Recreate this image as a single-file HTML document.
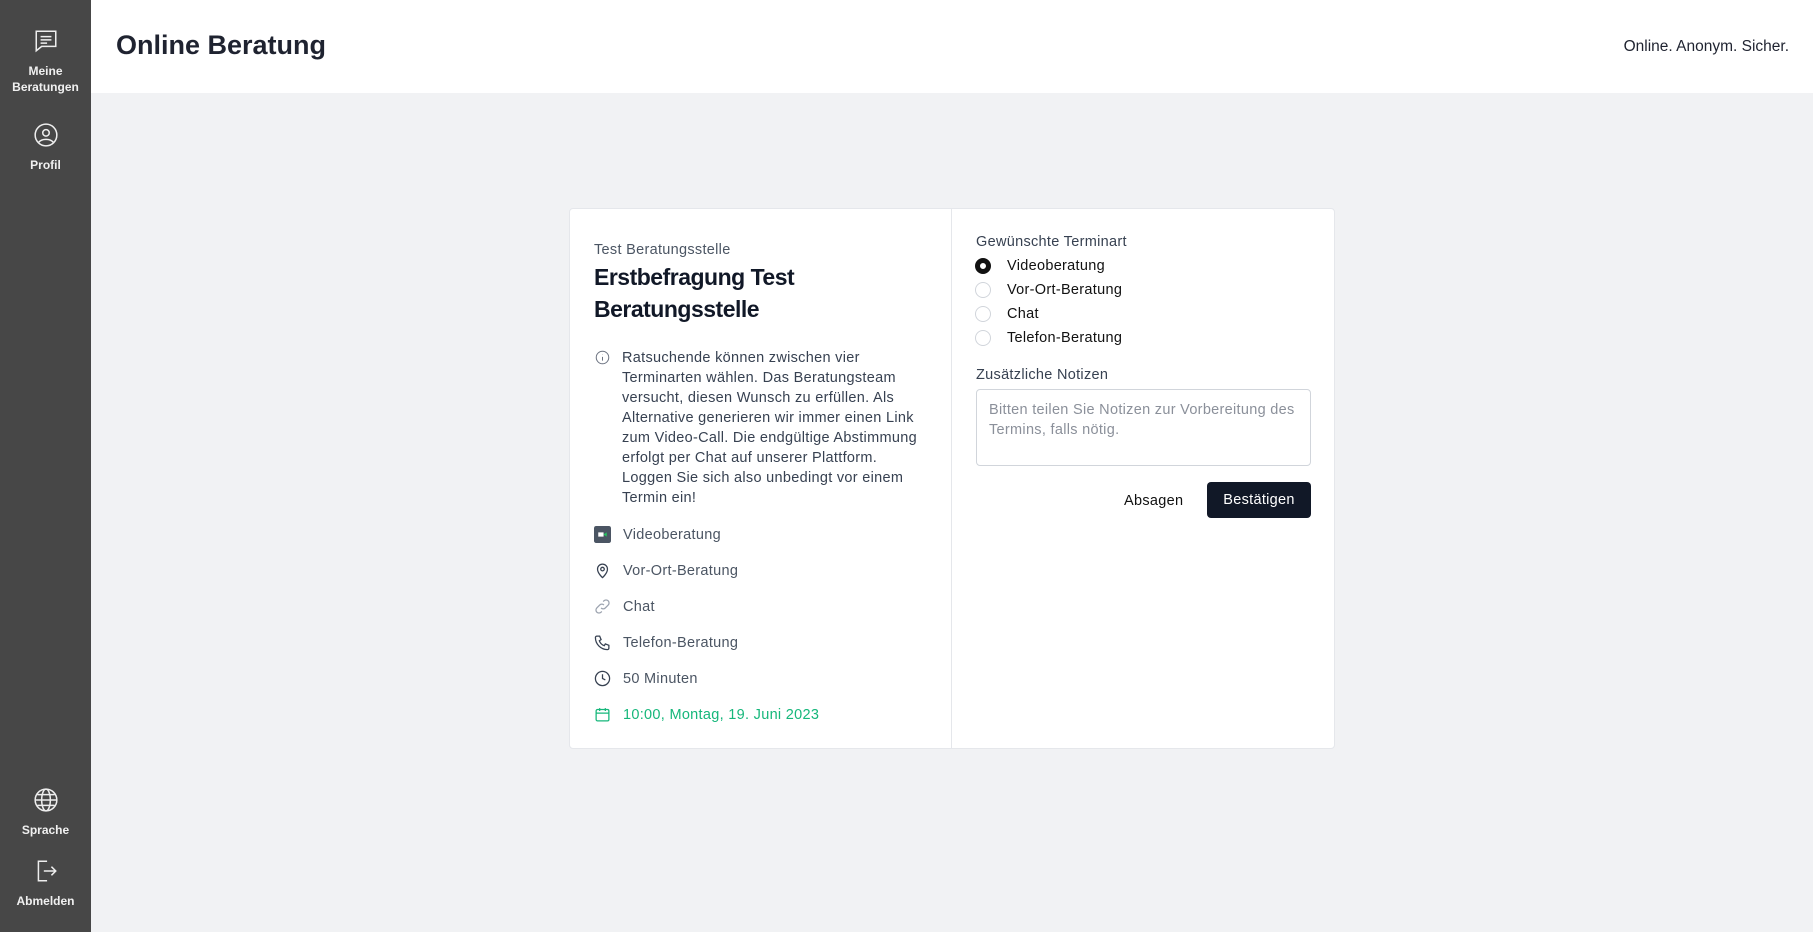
<!DOCTYPE html>
<html><head><meta charset="utf-8"><style>
*{box-sizing:border-box;margin:0;padding:0}
body{width:1820px;height:932px;background:#f1f2f4;font-family:"Liberation Sans",sans-serif;position:relative;overflow:hidden;color:#374151}
.sb{position:absolute;left:0;top:0;width:91px;height:932px;background:#474747}
.si{position:absolute;left:0;width:91px;text-align:center;color:#f0f0f0;font-size:12px;font-weight:bold;line-height:16px}
.si svg{display:block;margin:0 auto 9px}
.hd{position:absolute;left:91px;top:0;width:1722px;height:93px;background:#fff}
.hd h1{position:absolute;left:25px;top:30px;font-size:27px;color:#1f2330;font-weight:bold}
.hd .r{position:absolute;right:24px;top:38px;font-size:15.5px;color:#1f2330}
.strip{position:absolute;right:0;top:0;width:7px;height:932px;background:#fff}
.card{position:absolute;left:569px;top:208px;width:766px;height:541px;background:#fff;border:1px solid #e5e7eb;border-radius:4px}
.div{position:absolute;left:381px;top:0;width:1px;height:539px;background:#e5e7eb}
.a{position:absolute;font-size:14.5px;letter-spacing:0.3px}
.row{position:absolute;left:24px;font-size:14.5px;letter-spacing:0.3px;color:#4b5563;display:flex;align-items:center}
.row svg{width:17px;height:17px;margin-right:12px}
.rad{position:absolute;left:24px;display:flex;align-items:center;font-size:14.5px;letter-spacing:0.3px;color:#111}
.rad i{display:inline-block;width:16px;height:16px;border-radius:50%;border:1px solid #d1d5db;margin-right:16px}
.rad i.on{border:5px solid #111}
</style></head><body>
<div class="sb">
 <div class="si" style="top:28px"><svg width="26" height="26" viewBox="0 0 24 24" fill="none" stroke="#eee" stroke-width="1.4"><path d="M3 3h18v14H8l-5 4z"/><path d="M7 8h10M7 11h10M7 14h6"/></svg>Meine<br>Beratungen</div>
 <div class="si" style="top:122px"><svg width="26" height="26" viewBox="0 0 24 24" fill="none" stroke="#eee" stroke-width="1.4"><circle cx="12" cy="12" r="10"/><circle cx="12" cy="10" r="3"/><path d="M5 19c3-4 11-4 14 0"/></svg>Profil</div>
 <div class="si" style="top:787px"><svg width="26" height="26" viewBox="0 0 24 24" fill="none" stroke="#eee" stroke-width="1.4"><circle cx="12" cy="12" r="10"/><ellipse cx="12" cy="12" rx="4" ry="10"/><path d="M2 12h20M4 7h16M4 17h16"/></svg>Sprache</div>
 <div class="si" style="top:858px"><svg width="26" height="26" viewBox="0 0 24 24" fill="none" stroke="#eee" stroke-width="1.4"><path d="M13 3H5v18h8M10 12h11M17 8l4 4-4 4"/></svg>Abmelden</div>
</div>
<div class="hd"><h1>Online Beratung</h1><div class="r">Online. Anonym. Sicher.</div></div>
<div class="strip"></div>
<div class="card">
 <div class="div"></div>
 <div class="a" style="left:24px;top:33px;color:#4b5563">Test Beratungsstelle</div>
 <div class="a" style="left:24px;top:52px;font-size:23px;font-weight:bold;line-height:32px;color:#111827;letter-spacing:-0.5px">Erstbefragung Test<br>Beratungsstelle</div>
 <svg style="position:absolute;left:25px;top:141px" width="15" height="15" viewBox="0 0 24 24" fill="none" stroke="#6b7280" stroke-width="1.6"><circle cx="12" cy="12" r="10"/><path d="M12 11v6M12 7.5v.5"/></svg>
 <div class="a" style="left:52px;top:139px;white-space:nowrap;line-height:20px;color:#374151">Ratsuchende können zwischen vier<br>Terminarten wählen. Das Beratungsteam<br>versucht, diesen Wunsch zu erfüllen. Als<br>Alternative generieren wir immer einen Link<br>zum Video-Call. Die endgültige Abstimmung<br>erfolgt per Chat auf unserer Plattform.<br>Loggen Sie sich also unbedingt vor einem<br>Termin ein!</div>
 <div class="row" style="top:317px"><svg viewBox="0 0 16 16"><rect x="0" y="0" width="16" height="16" rx="2" fill="#4b5563"/><rect x="4" y="6" width="5" height="4" fill="#fff"/><path d="M9 8l3-2v4z" fill="#22c55e"/></svg>Videoberatung</div>
 <div class="row" style="top:353px"><svg viewBox="0 0 24 24" fill="none" stroke="#374151" stroke-width="1.8"><path d="M12 22s7-6 7-12a7 7 0 0 0-14 0c0 6 7 12 7 12z"/><circle cx="12" cy="10" r="2.5"/></svg>Vor-Ort-Beratung</div>
 <div class="row" style="top:389px"><svg viewBox="0 0 24 24" fill="none" stroke="#9ca3af" stroke-width="1.8"><path d="M10 14a4 4 0 0 0 6 0l4-4a4 4 0 0 0-6-6l-1 1M14 10a4 4 0 0 0-6 0l-4 4a4 4 0 0 0 6 6l1-1"/></svg>Chat</div>
 <div class="row" style="top:425px"><svg viewBox="0 0 24 24" fill="none" stroke="#374151" stroke-width="1.8"><path d="M4 3h4l2 5-2.5 1.5a11 11 0 0 0 7 7L16 14l5 2v4a2 2 0 0 1-2 2A17 17 0 0 1 2 5a2 2 0 0 1 2-2z"/></svg>Telefon-Beratung</div>
 <div class="row" style="top:461px"><svg viewBox="0 0 24 24" fill="none" stroke="#374151" stroke-width="1.8"><circle cx="12" cy="12" r="10"/><path d="M12 6v6l4 2"/></svg>50 Minuten</div>
 <div class="row" style="top:497px;color:#16b77b"><svg viewBox="0 0 24 24" fill="none" stroke="#16b77b" stroke-width="1.8"><rect x="3" y="5" width="18" height="16" rx="2"/><path d="M3 10h18M8 3v4M16 3v4"/></svg>10:00, Montag, 19. Juni 2023</div>
 <div style="position:absolute;left:381px;top:0;width:384px;height:539px">
  <div class="a" style="left:25px;top:25px;color:#374151">Gewünschte Terminart</div>
  <div class="rad" style="top:49px"><i class="on"></i>Videoberatung</div>
  <div class="rad" style="top:73px"><i></i>Vor-Ort-Beratung</div>
  <div class="rad" style="top:97px"><i></i>Chat</div>
  <div class="rad" style="top:121px"><i></i>Telefon-Beratung</div>
  <div class="a" style="left:25px;top:158px;color:#374151">Zusätzliche Notizen</div>
  <div style="position:absolute;left:25px;top:180px;width:335px;height:77px;border:1px solid #d1d5db;border-radius:4px;padding:10px 12px;font-size:14.5px;letter-spacing:0.3px;line-height:20px;color:#8b909a">Bitten teilen Sie Notizen zur Vorbereitung des Termins, falls nötig.</div>
  <div class="a" style="left:173px;top:284px;color:#111;font-weight:500">Absagen</div>
  <div style="position:absolute;left:256px;top:273px;width:104px;height:36px;background:#111827;border-radius:4px;color:#fff;font-size:14.5px;letter-spacing:0.3px;text-align:center;line-height:36px">Bestätigen</div>
 </div>
</div>
</body></html>
